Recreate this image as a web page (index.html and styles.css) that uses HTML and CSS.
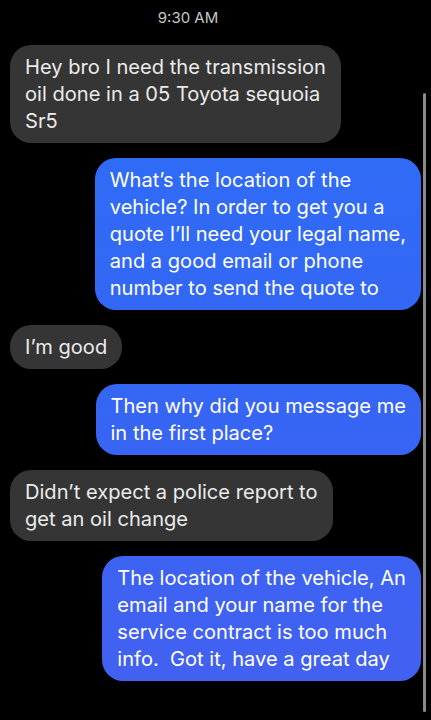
FILE: index.html
```html
<!DOCTYPE html>
<html lang="en">
<head>
  <meta charset="UTF-8" />
  <meta name="viewport" content="width=device-width, initial-scale=1.0" />
  <title>Messages</title>
  <link rel="stylesheet" href="styles.css">
</head>
<body>
  <div class="screen">
    <div class="timestamp">9:30 AM</div>
    <div class="thread">
      <div class="msg received">
        <div class="bubble">Hey bro I need the transmission<br>oil done in a 05 Toyota sequoia<br>Sr5</div>
      </div>
      <div class="msg sent">
        <div class="bubble">What’s the location of the<br>vehicle? In order to get you a<br>quote I’ll need your legal name,<br>and a good email or phone<br>number to send the quote to</div>
      </div>
      <div class="msg received">
        <div class="bubble">I’m good</div>
      </div>
      <div class="msg sent">
        <div class="bubble">Then why did you message me<br>in the first place?</div>
      </div>
      <div class="msg received">
        <div class="bubble">Didn’t expect a police report to<br>get an oil change</div>
      </div>
      <div class="msg sent">
        <div class="bubble">The location of the vehicle, An<br>email and your name for the<br>service contract is too much<br>info.&nbsp; Got it, have a great day</div>
      </div>
    </div>
    <div class="scrollbar"></div>
  </div>
</body>
</html>
```

FILE: styles.css
```css
body {
  margin: 0;
  background-color: #000;
  font-family: 'Inter', 'Noto Sans', sans-serif;
}

.screen {
  position: relative;
  width: 431px;
  height: 720px;
  overflow: hidden;
  background-color: #000;
}

.timestamp {
  padding: 9px 55px 0 0;
  height: 27px;
  text-align: center;
  font-size: 15px;
  line-height: 18px;
  color: #c7c7c7;
}

.thread {
  display: flex;
  flex-direction: column;
  gap: 15px;
  padding: 9px 10px 0 10px;
}

.msg {
  display: flex;
}

.msg.received {
  justify-content: flex-start;
}

.msg.sent {
  justify-content: flex-end;
}

.bubble {
  padding: 8.5px 15px 8.5px 15px;
  border-radius: 21px;
  font-size: 20.1px;
  line-height: 27px;
  white-space: nowrap;
}

.received .bubble {
  background-color: #353535;
  color: #ebebeb;
}

.sent .bubble {
  color: #fff;
  background-image: linear-gradient(to bottom, #2c6ff8 0%, #3466f4 50%, #4460f0 100%);
  background-attachment: fixed;
}

.scrollbar {
  position: absolute;
  right: 5px;
  top: 93px;
  width: 3px;
  height: 619px;
  border-radius: 2px;
  background-color: #8a8a8a;
}
```
